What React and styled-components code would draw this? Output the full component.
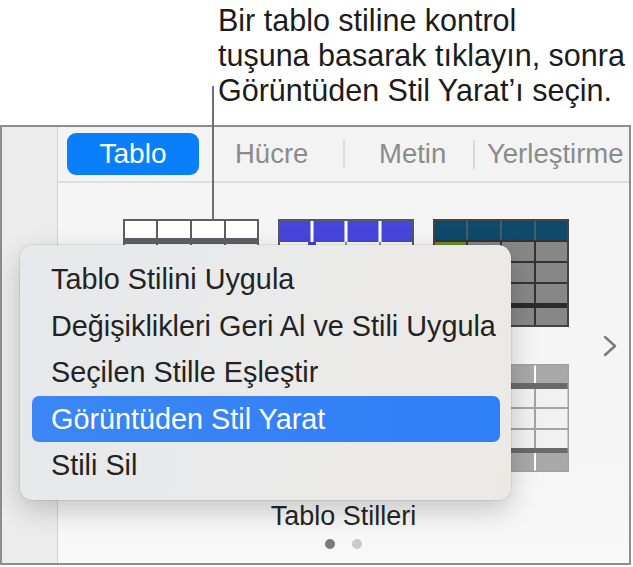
import React from "react";
import styled, { createGlobalStyle } from "styled-components";

const Global = createGlobalStyle`
  html, body { margin: 0; padding: 0; background: #ffffff; }
  body { font-family: "Liberation Sans", Arial, sans-serif; }
  * { box-sizing: border-box; }
`;

const Page = styled.div`
  position: relative;
  width: 633px;
  height: 567px;
  overflow: hidden;
  display: flex;
  flex-direction: column;
  background: #ffffff;
`;

const Callout = styled.div`
  height: 125px;
  flex-shrink: 0;
  padding: 3px 0 0 218px;
  font-size: 30.5px;
  line-height: 35px;
  color: #1c1c1c;
  white-space: nowrap;
`;

const Leader = styled.div`
  position: absolute;
  left: 211.5px;
  top: 86px;
  width: 2px;
  height: 133px;
  background: #6f6f6f;
  z-index: 3;
`;

const Window = styled.div`
  width: 631px;
  height: 440px;
  flex-shrink: 0;
  border: 2px solid #8d8d8d;
  display: grid;
  grid-template-columns: 56px 1fr;
  overflow: hidden;
`;

const Sidebar = styled.div`
  background: #ececec;
  border-right: 1px solid #d3d3d3;
`;

const Panel = styled.div`
  display: flex;
  flex-direction: column;
  background: #f5f5f5;
  min-width: 0;
  overflow: hidden;
`;

const TabBar = styled.div`
  height: 56px;
  flex-shrink: 0;
  display: flex;
  align-items: center;
  padding-left: 9px;
  background: #f3f3f3;
  border-bottom: 2px solid #dedede;
`;

const Pill = styled.div`
  width: 132px;
  height: 42px;
  flex-shrink: 0;
  border-radius: 9px;
  background: #0a7ffb;
  color: #ffffff;
  font-size: 28px;
  display: flex;
  align-items: center;
  justify-content: center;
`;

const Tab = styled.div`
  width: ${(p) => p.$w}px;
  flex-shrink: 0;
  padding-left: ${(p) => p.$pad}px;
  font-size: 27.5px;
  line-height: 42px;
  color: #8b8b8b;
  white-space: nowrap;
`;

const Sep = styled.div`
  width: 2px;
  height: 29px;
  flex-shrink: 0;
  background: #dadada;
`;

const Content = styled.div`
  flex: 1;
  display: flex;
  flex-direction: column;
  padding-top: 36px;
  background: linear-gradient(#f5f5f5 70%, #f8f8f8);
`;

const ThumbRow = styled.div`
  display: flex;
  align-items: center;
  padding-left: 65px;
`;

const ThumbGrid = styled.div`
  display: grid;
  grid-template-columns: repeat(3, 136px);
  grid-auto-rows: 108px;
  column-gap: 19px;
  row-gap: 37px;
`;

const Chevron = styled.svg`
  margin-left: 34px;
  width: 14px;
  height: 22px;
  flex-shrink: 0;
`;

const Label = styled.div`
  margin-top: 29px;
  align-self: center;
  font-size: 27px;
  line-height: 30px;
  color: #262626;
`;

const Dots = styled.div`
  margin-top: 8px;
  align-self: center;
  display: flex;
  gap: 17px;
`;

const Dot = styled.div`
  width: 10px;
  height: 10px;
  border-radius: 50%;
  background: ${(p) => (p.$on ? "#7a7a7a" : "#c9c9c9")};
`;

const Menu = styled.div`
  position: absolute;
  left: 20px;
  top: 245px;
  width: 491px;
  height: 255px;
  padding: 11px 11px 0 12px;
  border-radius: 13px;
  background: linear-gradient(100deg, #e6e8eb 0%, #eaeaea 55%, #ece9e5 100%);
  box-shadow: 0 10px 28px rgba(0, 0, 0, 0.2), 0 0 0 1px rgba(0, 0, 0, 0.07);
  z-index: 5;
`;

const MenuItem = styled.div`
  height: 46.6px;
  line-height: 46.6px;
  padding-left: 19px;
  font-size: 28.8px;
  white-space: nowrap;
  border-radius: 7px;
  color: ${(p) => (p.$active ? "#ffffff" : "#232323")};
  background: ${(p) =>
    p.$active ? "linear-gradient(90deg, #3c86f5, #2f7ff8)" : "transparent"};
`;

const Thumb = styled.svg`
  display: block;
  width: 136px;
  height: 108px;
`;

const cols = [0, 34, 68, 102, 136];

function VLines({ y1, y2, color, w = 2 }) {
  return cols.slice(1, 4).map((x) => (
    <line key={x} x1={x} y1={y1} x2={x} y2={y2} stroke={color} strokeWidth={w} />
  ));
}

function HLines({ ys, color, w = 2 }) {
  return ys.map((y) => (
    <line key={y} x1="0" y1={y} x2="136" y2={y} stroke={color} strokeWidth={w} />
  ));
}

function ThumbPlain() {
  return (
    <Thumb viewBox="0 0 136 108">
      <rect x="0" y="0" width="136" height="108" fill="#ffffff" />
      <rect x="0" y="19" width="136" height="6" fill="#5c5f66" />
      <rect x="0" y="84" width="136" height="5" fill="#5c5f66" />
      <VLines y1={0} y2={108} color="#5c5f66" />
      <HLines ys={[44, 64]} color="#5c5f66" />
      <rect x="1" y="1" width="134" height="106" fill="none" stroke="#5c5f66" strokeWidth="2" />
    </Thumb>
  );
}

function ThumbBlue() {
  return (
    <Thumb viewBox="0 0 136 108">
      <rect x="0" y="0" width="136" height="108" fill="#f7f7f7" />
      <rect x="0" y="0" width="136" height="23" fill="#4646dc" />
      <VLines y1={23} y2={108} color="#8a8d92" />
      <HLines ys={[44, 64, 86]} color="#8a8d92" />
      {cols.slice(1, 4).map((x) => (
        <rect key={x} x={x - 1.5} y="1" width="3" height="22" fill="#ffffff" />
      ))}
      <rect x="30" y="23" width="8" height="4" fill="#4040d0" />
      <rect x="1" y="1" width="134" height="106" fill="none" stroke="#555a60" strokeWidth="2" />
    </Thumb>
  );
}

function ThumbTeal() {
  return (
    <Thumb viewBox="0 0 136 108">
      <rect x="0" y="0" width="136" height="108" fill="#878787" />
      <rect x="0" y="0" width="136" height="22" fill="#0d4a6b" />
      <rect x="0" y="22" width="34" height="21" fill="#6b8e2a" />
      <VLines y1={0} y2={22} color="#4b5b66" />
      <VLines y1={22} y2={108} color="#333333" />
      <HLines ys={[22, 43, 64]} color="#333333" />
      <rect x="0" y="84" width="136" height="5" fill="#2b2b2b" />
      <rect x="1" y="1" width="134" height="106" fill="none" stroke="#444444" strokeWidth="2" />
    </Thumb>
  );
}

function ThumbGray() {
  return (
    <Thumb viewBox="0 0 136 108">
      <rect x="0" y="0" width="136" height="108" fill="#f1f1f1" />
      <rect x="0" y="0" width="136" height="19" fill="#a9a9a9" />
      <rect x="0" y="89" width="136" height="19" fill="#a9a9a9" />
      <VLines y1={25} y2={84} color="#a3a3a3" />
      <HLines ys={[44, 65]} color="#a3a3a3" />
      {cols.slice(1, 4).map((x) => (
        <React.Fragment key={x}>
          <rect x={x - 1} y="0" width="2" height="19" fill="#ffffff" />
          <rect x={x - 1} y="89" width="2" height="19" fill="#ffffff" />
        </React.Fragment>
      ))}
      <rect x="0" y="19" width="136" height="6" fill="#6a6a6a" />
      <rect x="0" y="84" width="136" height="5" fill="#6a6a6a" />
      <rect x="0.75" y="0.75" width="134.5" height="106.5" fill="none" stroke="#a0a0a0" strokeWidth="1.5" />
    </Thumb>
  );
}

const menuItems = [
  "Tablo Stilini Uygula",
  "Değişiklikleri Geri Al ve Stili Uygula",
  "Seçilen Stille Eşleştir",
  "Görüntüden Stil Yarat",
  "Stili Sil",
];

export default function App() {
  return (
    <>
      <Global />
      <Page>
        <Callout>
          Bir tablo stiline kontrol
          <br />
          tuşuna basarak tıklayın, sonra
          <br />
          Görüntüden Stil Yarat’ı seçin.
        </Callout>
        <Leader />
        <Window>
          <Sidebar />
          <Panel>
            <TabBar>
              <Pill>Tablo</Pill>
              <Tab $w={144} $pad={36}>Hücre</Tab>
              <Sep />
              <Tab $w={128} $pad={34}>Metin</Tab>
              <Sep />
              <Tab $w={160} $pad={12}>Yerleştirme</Tab>
            </TabBar>
            <Content>
              <ThumbRow>
                <ThumbGrid>
                  <ThumbPlain />
                  <ThumbBlue />
                  <ThumbTeal />
                  <ThumbBlue />
                  <ThumbPlain />
                  <ThumbGray />
                </ThumbGrid>
                <Chevron viewBox="0 0 14 22">
                  <polyline
                    points="2,2 12,11 2,20"
                    fill="none"
                    stroke="#7a7a7a"
                    strokeWidth="2.4"
                    strokeLinecap="round"
                    strokeLinejoin="round"
                  />
                </Chevron>
              </ThumbRow>
              <Label>Tablo Stilleri</Label>
              <Dots>
                <Dot $on />
                <Dot />
              </Dots>
            </Content>
          </Panel>
        </Window>
        <Menu>
          {menuItems.map((t, i) => (
            <MenuItem key={t} $active={i === 3}>
              {t}
            </MenuItem>
          ))}
        </Menu>
      </Page>
    </>
  );
}
